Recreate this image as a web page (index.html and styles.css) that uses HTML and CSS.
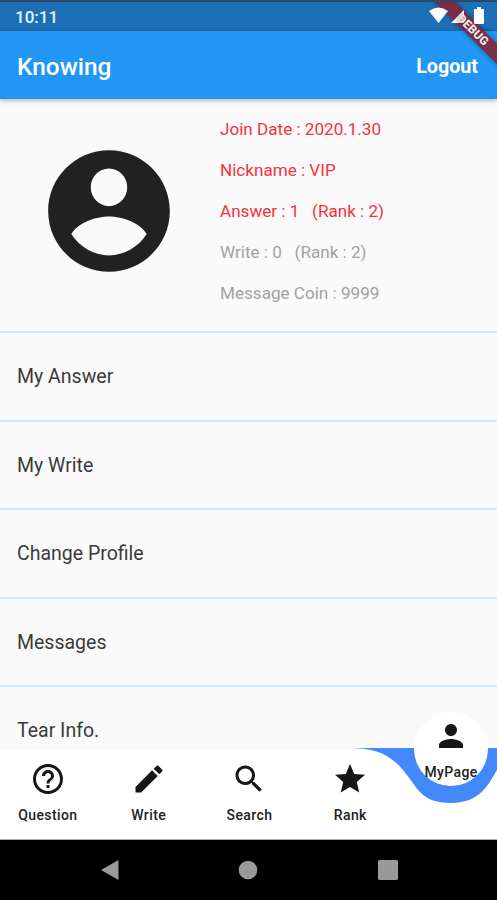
FILE: index.html
```html
<!DOCTYPE html>
<html lang="en">
<head>
    <meta charset="UTF-8">
    <meta name="viewport" content="width=device-width, initial-scale=1.0">
    <title>Knowing - My Page</title>
    <link rel="stylesheet" href="styles.css">
</head>
<body>

<div class="screen">
    <div class="status-bar">
        <span class="clock">10:11</span>
        <div class="status-icons">
            <svg width="19" height="16" viewBox="0 0 19 16"><path d="M0 4Q9.500 -3 19 4L9.500 16Z" fill="#fff"/></svg>
            <svg width="15" height="16" viewBox="0 0 15 16"><path d="M0 16L13 3V16Z" fill="#fff"/></svg>
            <svg class="battery" width="10" height="17" viewBox="0 0 10 17"><path d="M3 0h4v2h2q1 0 1 1v13q0 1-1 1H1q-1 0-1-1V3q0-1 1-1h2z" fill="#fff"/></svg>
        </div>
    </div>

    <div class="header">
        <div class="title">Knowing</div>
        <div class="logout">Logout</div>
    </div>

    <div class="content">
        <div class="profile">
            <svg class="avatar" viewBox="0 0 24 24"><path d="M12 2C6.480 2 2 6.480 2 12s4.480 10 10 10 10-4.480 10-10S17.520 2 12 2zm0 3c1.660 0 3 1.400 3 3.100s-1.340 3.100-3 3.100-3-1.400-3-3.100 1.340-3.100 3-3.100zm0 14.300c-2.500 0-4.900-1.400-6.200-3.500 1.100-1.900 4-2.900 6.200-2.900s5.100 1 6.200 2.900c-1.300 2.100-3.700 3.500-6.200 3.500z"/></svg>
            <div class="info">
                <p class="red">Join Date : 2020.1.30</p>
                <p class="red">Nickname : VIP</p>
                <p class="red">Answer : 1 &nbsp; (Rank : 2)</p>
                <p>Write : 0 &nbsp; (Rank : 2)</p>
                <p>Message Coin : 9999</p>
            </div>
        </div>
        <div class="menu-item">My Answer</div>
        <div class="menu-item">My Write</div>
        <div class="menu-item">Change Profile</div>
        <div class="menu-item">Messages</div>
        <div class="menu-item">Tear Info.</div>
    </div>

    <div class="bottom-nav">
        <svg class="curve" width="147" height="56" viewBox="0 0 147 56"><path d="M0 0H147V22C139 35 131 55 101 55C70 55 67 38 56 26C41 5 23 0 0 0Z" fill="#4389fb"/></svg>
        <div class="bubble"></div>
        <div class="nav-item">
            <svg viewBox="0 0 24 24"><path d="M11 18h2v-2h-2v2zm1-16C6.480 2 2 6.480 2 12s4.480 10 10 10 10-4.480 10-10S17.520 2 12 2zm0 18c-4.410 0-8-3.590-8-8s3.590-8 8-8 8 3.590 8 8-3.590 8-8 8zm0-14c-2.210 0-4 1.790-4 4h2c0-1.100.900-2 2-2s2 .900 2 2c0 2-3 1.750-3 5h2c0-2.250 3-2.500 3-5 0-2.210-1.790-4-4-4z"/></svg>
            <span>Question</span>
        </div>
        <div class="nav-item">
            <svg viewBox="0 0 24 24"><path d="M3 17.250V21h3.750L17.810 9.940l-3.750-3.750L3 17.250zM20.710 7.040c.390-.390.390-1.020 0-1.410l-2.340-2.340c-.390-.390-1.020-.390-1.410 0l-1.830 1.830 3.750 3.750 1.830-1.830z"/></svg>
            <span>Write</span>
        </div>
        <div class="nav-item">
            <svg viewBox="0 0 24 24"><path d="M15.500 14h-.790l-.280-.270C15.410 12.590 16 11.110 16 9.500 16 5.910 13.090 3 9.500 3S3 5.910 3 9.500 5.910 16 9.500 16c1.610 0 3.090-.590 4.230-1.570l.270.280v.790l5 4.990L20.490 19l-4.990-5zm-6 0C7.010 14 5 11.990 5 9.500S7.010 5 9.500 5 14 7.010 14 9.500 11.990 14 9.500 14z"/></svg>
            <span>Search</span>
        </div>
        <div class="nav-item">
            <svg viewBox="0 0 24 24"><path d="M12 17.270L18.180 21l-1.640-7.030L22 9.240l-7.190-.610L12 2 9.190 8.630 2 9.240l5.460 4.730L5.820 21z"/></svg>
            <span>Rank</span>
        </div>
        <div class="nav-item active">
            <svg viewBox="0 0 24 24"><path d="M12 12c2.210 0 4-1.790 4-4s-1.790-4-4-4-4 1.790-4 4 1.790 4 4 4zm0 2c-2.670 0-8 1.340-8 4v2h16v-2c0-2.660-5.330-4-8-4z"/></svg>
            <span>MyPage</span>
        </div>
    </div>

    <div class="system-bar">
        <svg width="19" height="22" viewBox="0 0 19 22"><path d="M18.500 1V21L1 11Z"/></svg>
        <svg width="20" height="20" viewBox="0 0 20 20"><circle cx="10" cy="10" r="9.300"/></svg>
        <svg width="20" height="20" viewBox="0 0 20 20"><rect width="20" height="20" rx="1.500"/></svg>
    </div>

    <!-- ribbon goes under the status icons, its label over them -->
    <div class="debug-corner"><div class="debug-banner"></div></div>
    <div class="debug-corner label"><div class="debug-text">DEBUG</div></div>
</div>

</body>
</html>
```
FILE: styles.css
```css
* { margin: 0; padding: 0; box-sizing: border-box; }
body { font-family: Roboto, sans-serif; background: #000; }
.screen {
    position: relative;
    display: flex;
    flex-direction: column;
    height: 900px;
    overflow: hidden;
}
.status-bar {
    display: flex;
    justify-content: space-between;
    height: 31px;
    padding: 0 13px 0 15px;
    border-top: 2px solid #2b4966;
    background: #1e70b6;
    color: #e9f3fb;
}
.clock { font-size: 17px; line-height: 30px; font-weight: 500; }
.status-icons {
    position: relative;
    display: flex;
    align-items: flex-start;
    gap: 3px;
    padding-top: 5px;
    z-index: 3;
}
.battery { margin-left: 5px; }
.header {
    display: flex;
    align-items: center;
    justify-content: space-between;
    height: 68px;
    padding: 2px 19px 0 17px;
    background: #2196f3;
    color: #fff;
    box-shadow: 0 1px 5px rgba(0, 0, 0, 0.35);
    z-index: 1;
}
.title { font-size: 24.4px; font-weight: 500; }
.logout { font-size: 19.7px; font-weight: 700; }
.content { height: 650px; background: #fafafa; overflow: hidden; }
.profile { display: flex; height: 232.4px; }
.avatar { width: 146px; height: 146px; margin: 39px 0 0 36px; fill: #212121; }
.info {
    margin: 10px 0 0 38px;
    font-size: 17.1px;
    line-height: 41.1px;
    color: #a2a2a2;
    white-space: nowrap;
}
.info .red { color: #f7323a; }
.menu-item {
    height: 88.4px;
    padding-left: 17px;
    border-top: 2px solid #cfe7f7;
    font-size: 19.5px;
    line-height: 88px;
    color: #3a3a3a;
}
.bottom-nav {
    position: relative;
    display: grid;
    grid-template-columns: repeat(5, 100.8px);
    height: 91px;
    padding-top: 12px;
    background: #fff;
    border-bottom: 1px solid #aaa;
}
.curve { position: absolute; left: 350px; top: -1px; }
.bubble {
    position: absolute;
    left: 414px;
    top: -37px;
    width: 74px;
    height: 74px;
    border-radius: 50%;
    background: #fff;
}
.nav-item {
    position: relative;
    left: -2.5px;
    display: flex;
    flex-direction: column;
    align-items: center;
    font-size: 14px;
    font-weight: 500;
    letter-spacing: 0.4px;
    color: #222;
}
.nav-item svg { width: 36px; height: 36px; fill: #171717; }
.nav-item span { margin-top: 10px; line-height: 16px; }
.active { top: -43px; }
.system-bar {
    display: flex;
    align-items: center;
    gap: 119.5px;
    height: 60px;
    padding-left: 99.5px;
    background: #000;
}
.system-bar svg { fill: #999; }
.debug-corner {
    position: absolute;
    top: 2px;
    right: 0;
    width: 80px;
    height: 80px;
    overflow: hidden;
    z-index: 2;
}
.label { z-index: 4; }
.debug-banner, .debug-text {
    position: absolute;
    left: -4px;
    top: 21px;
    width: 120px;
    height: 14px;
    transform: rotate(45deg);
}
.debug-banner {
    background: rgba(132, 38, 59, 0.93);
    box-shadow: 0 0 5px rgba(0, 0, 0, 0.4);
}
.debug-text {
    color: #f3e3e6;
    font-size: 12px;
    line-height: 14px;
    font-weight: 900;
    text-align: center;
    text-shadow: 0 0 2px rgba(60, 20, 30, 0.8);
}
```
